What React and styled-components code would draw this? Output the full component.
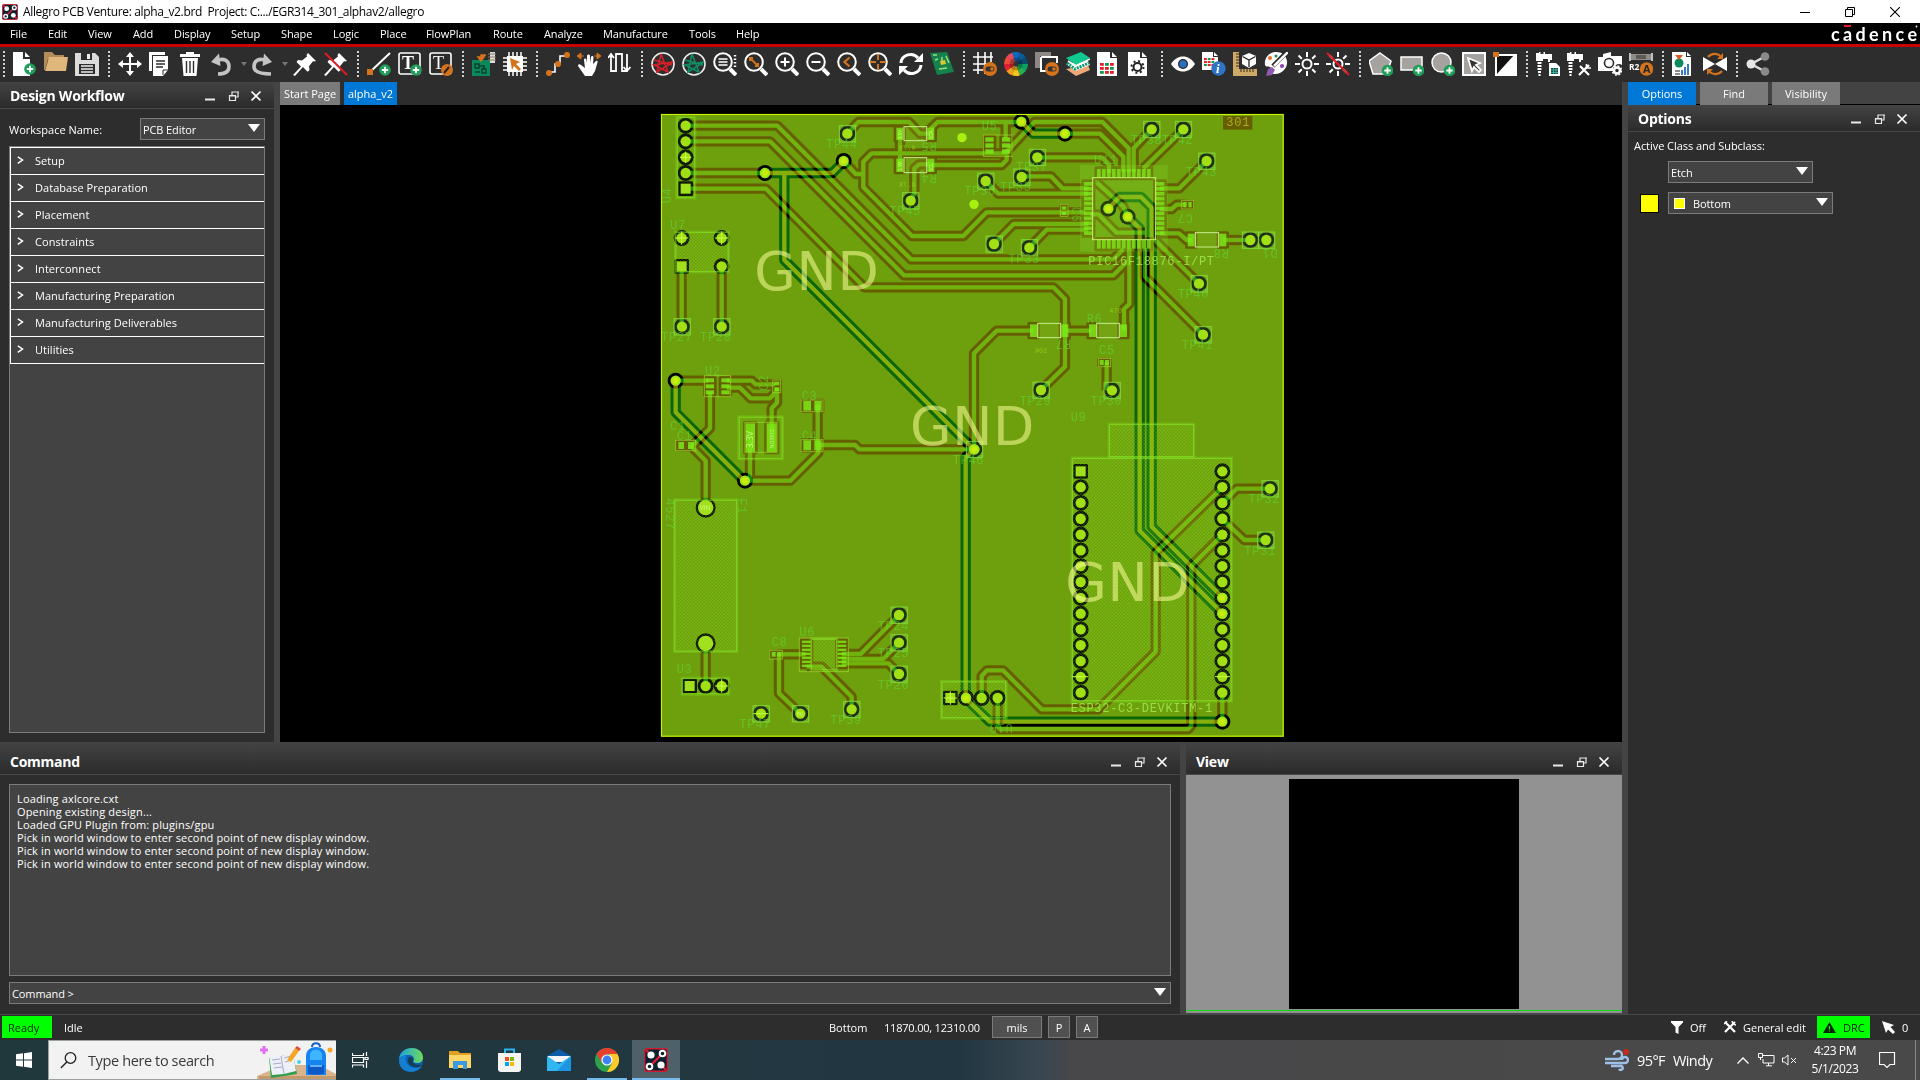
import React from "react";
import styled, { createGlobalStyle, css } from "styled-components";

const Global = createGlobalStyle`
  * { box-sizing: border-box; }
  html, body { margin: 0; padding: 0; overflow: hidden; background: #2d2d2d; }
  body { font-family: "Open Sans", "Noto Sans", sans-serif; font-size: 11px; color: #fff; }
  svg { display: block; flex: none; }
`;

/* ---------- window frame ---------- */
const Window = styled.div`
  width: 1920px;
  height: 1080px;
  display: flex;
  flex-direction: column;
  background: #2d2d2d;
  white-space: nowrap;
`;
const TitleBar = styled.header`
  height: 23px;
  background: #fff;
  color: #000;
  display: flex;
  align-items: center;
  padding: 0 20px 0 2px;
  gap: 5px;
  font-size: 12px;
  letter-spacing: -0.35px;
  white-space: pre;
`;
const Spacer = styled.div`
  flex: 1;
`;
const WindowButtons = styled.div`
  display: flex;
  align-items: center;
  gap: 35px;
`;
const MenuBar = styled.nav`
  height: 21px;
  background: #000;
  display: flex;
  align-items: center;
  padding: 0 0 1px 10px;
  letter-spacing: -0.1px;
`;
const MenuItem = styled.span`
  width: ${(p) => p.$w}px;
`;
const Brand = styled.div`
  margin-left: auto;
  padding-right: 2px;
  display: flex;
  svg { overflow: visible; }
`;
const RedRule = styled.div`
  height: 3px;
  background: #c80000;
`;
const Toolbar = styled.div`
  height: 35px;
  display: flex;
  align-items: center;
  gap: 7px;
  padding: 0 0 1px 1px;
`;
const Divider = styled.i`
  width: 5px;
  height: 26px;
  background: repeating-linear-gradient(#cfcfcf 0 2px, transparent 2px 4px) center / 2px 100% no-repeat;
`;
const Drop = styled.i`
  width: 3px;
  height: 4px;
  display: flex;
  justify-content: center;
  &::after {
    content: "";
    flex: none;
    border: 3px solid transparent;
    border-top: 4px solid #777;
    border-bottom: 0;
  }
`;

/* ---------- work area ---------- */
const Main = styled.div`
  height: 932px;
  display: flex;
`;
const LeftSide = styled.div`
  width: 1622px;
  display: flex;
  flex-direction: column;
`;
const Upper = styled.div`
  height: 660px;
  display: flex;
`;
const Lower = styled.div`
  height: 272px;
  display: flex;
  background: #444;
`;
const Split = styled.div`
  width: 6px;
  background: #444;
`;
const PanelHead = styled.div`
  height: ${(p) => p.$h || 27}px;
  padding: ${(p) => p.$pt || 1}px 12px 0 ${(p) => p.$pl || 10}px;
  background: linear-gradient(#434343, #2b2b2b);
  border-bottom: 1px solid #484848;
  display: flex;
  align-items: center;
  justify-content: space-between;
  font-weight: 700;
  font-size: 14px;
  letter-spacing: -0.25px;
`;
const Workflow = styled.section`
  width: 274px;
  display: flex;
  flex-direction: column;
`;
const WorkspaceRow = styled.div`
  display: flex;
  justify-content: space-between;
  align-items: center;
  padding: 9px 9px 0 9px;
  margin-bottom: 6px;
`;
const Select = styled.div`
  width: ${(p) => p.$w}px;
  height: 22px;
  border: 1px solid #7b7b7b;
  background: #434343;
  display: flex;
  align-items: center;
  padding: 0 4px 0 ${(p) => p.$pl || 2}px;
  gap: 8px;
  letter-spacing: -0.1px;
  &::after {
    content: "";
    margin-left: auto;
    margin-top: -3px;
    border: 6px solid transparent;
    border-top: 8px solid #fff;
    border-bottom: 0;
  }
`;
const Tree = styled.div`
  width: 256px;
  height: 587px;
  margin-left: 9px;
  border: 1px solid #7b7b7b;
  background: #434343;
`;
const TreeRow = styled.div`
  height: 27px;
  border: 1px solid #fff;
  border-width: ${(p) => (p.$last ? "1px 0 1px 1px" : "1px 0 0 1px")};
  ${(p) => p.$last && css`height: 28px;`}
  display: flex;
  align-items: center;
  gap: 11px;
  padding: 0 0 2px 6px;
  letter-spacing: 0.04px;
`;
const CanvasCol = styled.section`
  width: 1342px;
  display: flex;
  flex-direction: column;
`;
const Tabs = styled.div`
  height: 23px;
  display: flex;
  gap: ${(p) => p.$gap}px;
  ${(p) => p.$side && css`background: linear-gradient(#434343 22px, #000 22px);`}
`;
const Tab = styled.div`
  width: ${(p) => p.$w}px;
  height: 23px;
  display: flex;
  align-items: center;
  justify-content: center;
  background: ${(p) => (p.$on ? "#0078d7" : "#7a7a7a")};
`;
const Canvas = styled.div`
  height: 637px;
  background: #000;
`;

const CommandPanel = styled.section`
  width: 1180px;
  background: #2d2d2d;
`;
const Log = styled.div`
  width: 1162px;
  height: 192px;
  margin: 9px 0 6px 9px;
  border: 1px solid #7b7b7b;
  background: #434343;
  padding: 7px;
  line-height: 13px;
  letter-spacing: 0.15px;
`;
const CommandLine = styled(Select)`
  margin-left: 9px;
`;
const ViewPanel = styled.section`
  width: 436px;
`;
const ViewBody = styled.div`
  height: 238px;
  background: #929292;
  display: flex;
  flex-direction: column;
  align-items: center;
  padding-top: 4px;
`;
const ViewWorld = styled.div`
  width: 230px;
  height: 230px;
  background: #000;
  margin-bottom: 1px;
`;
const ViewRule = styled.div`
  width: 100%;
  height: 1px;
  background: #10e010;
`;
const RightPanel = styled.section`
  width: 292px;
`;
const OptionsBody = styled.div`
  display: flex;
  flex-direction: column;
  gap: 9px;
  padding: 3px 0 0 6px;
`;
const OptionsLabel = styled.div`
  height: 22px;
  line-height: 22px;
  margin-bottom: -5px;
  letter-spacing: -0.05px;
`;
const OptionRow = styled.div`
  display: flex;
  align-items: center;
  height: 22px;
  padding-left: ${(p) => p.$pl || 0}px;
  gap: 9px;
`;
const Swatch = styled.i`
  width: ${(p) => p.$s}px;
  height: ${(p) => p.$s}px;
  background: #ff0;
  border: 1px solid ${(p) => p.$edge};
`;

/* ---------- status + taskbar ---------- */
const Status = styled.footer`
  height: 26px;
  border-top: 1px solid #484848;
  display: flex;
  align-items: center;
  padding-bottom: 1px;
`;
const Cell = styled.div`
  width: ${(p) => p.$w}px;
  height: 22px;
  display: flex;
  align-items: center;
  gap: 7px;
  padding-left: ${(p) => p.$pl || 0}px;
  letter-spacing: ${(p) => p.$ls || 0}px;
  ${(p) => p.$green && css`background: #0f0; color: #042404;`}
  margin-left: ${(p) => p.$ml || 0}px;
`;
const StatusButton = styled.div`
  width: ${(p) => p.$w}px;
  height: 22px;
  margin-right: 6px;
  border: 1px solid #7b7b7b;
  background: #505050;
  display: flex;
  align-items: center;
  justify-content: center;
`;
const Taskbar = styled.div`
  height: 40px;
  display: flex;
  background: linear-gradient(90deg, #20373c 0, #223740 36%, #223642 50%, #374650 54%, #48484a 56%, #494949 100%);
`;
const Slot = styled.div`
  width: ${(p) => p.$w || 48}px;
  height: 40px;
  display: flex;
  align-items: center;
  justify-content: center;
  background: ${(p) => (p.$active ? "#4f6168" : "transparent")};
  border-bottom: 2px solid transparent;
  border-top: 2px solid transparent;
  ${(p) => p.$line && css`background: linear-gradient(#76b9ed, #76b9ed) center bottom / ${p.$line}px 2px no-repeat border-box ${p.$active ? ", #4f6168" : ""};`}
`;
const Search = styled.div`
  width: 288px;
  height: 40px;
  background: #f2f2f2;
  border: 1px solid #9aa0a2;
  border-right: 0;
  color: #3a3a3a;
  display: flex;
  align-items: center;
  padding-left: 11px;
  gap: 11px;
  font-size: 14.5px;
  letter-spacing: -0.38px;
`;
const Tray = styled.div`
  margin-left: auto;
  display: flex;
  align-items: center;
  height: 40px;
  font-size: 14.5px;
  letter-spacing: -0.6px;
`;
const TrayItem = styled.div`
  width: ${(p) => p.$w}px;
  height: 40px;
  display: flex;
  align-items: center;
`;
const Clock = styled.div`
  width: 62px;
  margin-right: 13px;
  text-align: center;
  font-size: 12px;
  letter-spacing: -0.4px;
  line-height: 18px;
`;
const TrayEdge = styled.div`
  width: 5px;
  height: 40px;
  border-left: 1px solid #8a8a8a;
`;

/* ---------- toolbar icons (24 × 24) ---------- */
const W = "#fff", O = "#d4731c", G = "#1e9e58", GR = "#a5a2a0";
const Plus = ({ x = 18, y = 18 }) => (
  <g><circle cx={x} cy={y} r="5.8" fill={G} /><path d={`M${x - 3.2} ${y}h6.4M${x} ${y - 3.2}v6.4`} stroke={W} strokeWidth="1.8" /></g>
);
const Lens = ({ children }) => (
  <g fill="none" stroke={W} strokeWidth="2"><circle cx="10" cy="10" r="8.8" /><path d="M17 17l6 6" strokeWidth="4" />{children}</g>
);
const DocShape = ({ w = 20 }) => <path d={`M0 0h${w - 7}v6h7v18H0zM${w - 5} 0l5 5h-5z`} fill={W} />;
const Pin = () => <path d="M15 1l8 8-2 .6-1-.4-4 5 .5 4-2 1.500-4.600-4.600L2 24 0 23l8-8.500-4.500-4.500L5 8l4 .5 5-4-.5-1.500z" fill={W} />;
const Sun = () => (
  <g fill="none" stroke={W} strokeWidth="2"><circle cx="12" cy="12" r="4.500" /><path d="M12 0v5M12 19v5M0 12h5M19 12h5M3.500 3.500l3.300 3.300M17.200 17.200l3.300 3.300M3.500 20.500l3.300-3.300M17.200 6.800l3.300-3.300" /></g>
);
const StarNet = ({ c }) => (
  <g fill="none"><circle cx="12" cy="12" r="11" stroke="#eee" strokeWidth="1.600" /><path d="M10 2l7 18-14-7 19-3L6 20 10 2M3 8l18 5" stroke={c} strokeWidth="1.600" /></g>
);
const Toggle = ({ x = 17, y = 17 }) => (
  <g><circle cx={x} cy={y} r="7" fill={O} /><rect x={x - 4.500} y={y - 2.500} width="9" height="5" rx="2.500" fill="#333" /><circle cx={x + 2} cy={y} r="1.800" fill={O} /></g>
);
const Drill = () => <path d="M0 1h3V0h1.500v2h3V0H9v2h7v6h-2v2h-2V7H7v2H0zM1.500 10h4v2h-4zM1.500 13h4v2h-4zM1.500 16h4v2h-4zM2 19h3v2H2zM2.500 22h2v2h-2z" fill={W} />;
const Grid6 = ({ x, y, s = 1 }) => (
  <g transform={`translate(${x} ${y}) scale(${s})`}>
    {[0, 1, 2].map((r) => [0, 1, 2].map((c) => <rect key={r + "" + c} x={c * 5} y={r * 4} width="3.800" height="2.800" fill={(r * 2 + c) % 3 === 1 ? "#0a9a50" : "#e0202a"} />))}
  </g>
);

const ICONS = {
  new: <><path d="M0 0h10v7h7v17H0zM12 0l5 5h-5z" fill={W} /><Plus x={17} y={17} /></>,
  open: <><path d="M0 0h8l3 3h9v4H4L1 18H0z" fill="#b48c58" /><path d="M5 5h19l-2 14H1z" fill="#dfb77c" /></>,
  save: <><path d="M0 1h20l4 4v19H0z" fill="#dcdcdc" /><path d="M6 1h11v7H6z" fill="#2d2d2d" /><path d="M12 2h3v5h-3z" fill="#eee" /><path d="M4 12h16v10H4z" fill="#2d2d2d" /><path d="M6 14h12M6 17h12M6 20h12" stroke="#eee" strokeWidth="1.500" /></>,
  move: <path d="M12 0l4 5h-3v6h6V8l5 4-5 4v-3h-6v6h3l-4 5-4-5h3v-6H5v3l-5-4 5-4v3h6V5H8z" fill={W} />,
  copy: <><path d="M0 0h16v3H3v16H0z" fill={W} /><path d="M4 4h15v14l-5 6H4z" fill={W} /><path d="M7 9h9M7 12h9M7 15h7" stroke="#2d2d2d" strokeWidth="1.500" /><path d="M14 23v-5h5" fill="none" stroke="#2d2d2d" /></>,
  trash: <><path d="M0 2h6V0h8v2h6v3H0zM2 6h16l-1.500 18h-13z" fill={W} /><path d="M6.500 9v12M10 9v12M13.500 9v12" stroke="#2d2d2d" strokeWidth="1.400" /></>,
  undo: <><path d="M5 9c8-4 13 0 13 5.500 0 5-4 7.500-11 7.500" fill="none" stroke="#c4c4c4" strokeWidth="3.600" /><path d="M0 10L8 1.500 9.500 14z" fill="#c4c4c4" /></>,
  redo: <><path d="M15 9C7 5 2 9 2 14.500 2 19.500 7 22 19 22" fill="none" stroke="#c4c4c4" strokeWidth="3.600" /><path d="M20 10l-8-8.500L10.500 14z" fill="#c4c4c4" /></>,
  pin: <Pin />,
  unpin: <><Pin /><path d="M1 1l22 22" stroke="#e01b24" strokeWidth="2" /></>,
  line: <><path d="M3 20L23 1" stroke={W} strokeWidth="2" /><rect x="0" y="17" width="6" height="6" fill={O} /><Plus x={18} y={18} /></>,
  text: <><rect x="1" y="1" width="21" height="21" rx="2" fill="none" stroke={W} strokeWidth="1.600" /><text x="4" y="17" fontFamily="Liberation Serif, serif" fontSize="18" fontWeight="700" fill={W}>T</text><Plus x={18} y={18} /></>,
  textEdit: <><rect x="1" y="1" width="21" height="21" rx="2" fill="none" stroke={W} strokeWidth="1.600" /><text x="4" y="17" fontFamily="Liberation Serif, serif" fontSize="18" fill={W}>T</text><circle cx="18" cy="18" r="6" fill={O} /><path d="M15 21l5-6" stroke="#222" strokeWidth="2" /></>,
  place: <><path d="M0 8h18v16H0z" fill="#0a8a5c" /><path d="M3 12h4v4H3zM10 17h4v4h-4zM7 14h5v3M3 20h5" fill="none" stroke="#06402c" strokeWidth="1.500" /><path d="M18 0h5v11h-5z" fill="#ddd" /><path d="M16 2h8M16 5h8M16 8h8" stroke="#8a7a60" /><path d="M14 3H9v4M6 5l3 4 3-4z" stroke={O} fill={O} strokeWidth="1.500" /></>,
  chip: <><path d="M6 0v24M10 0v24M14 0v24M18 0v24M0 6h24M0 10h24M0 14h24M0 18h24" stroke={W} strokeWidth="1.500" /><path d="M4 4h16v16H4z" fill={W} /><path d="M7 6l10 4-4 2 5 5-2 2-5-5-2 4z" fill={O} /></>,
  route: <><path d="M3 20h6v-8h5V4h6" fill="none" stroke={W} strokeWidth="1.600" /><circle cx="3" cy="21" r="3" fill={O} /><circle cx="12" cy="12" r="3" fill={O} /><circle cx="21" cy="3" r="3" fill={O} /></>,
  hand: <><path d="M8 24L1 14c0-2 2-2 3-1l4 3-1-8c0-2 2.500-2 2.500 0l.5 3V4c0-2 3-2 3 0v7l1-6c.5-1.500 2.500-1 2.500.5L16 12l3-3c1.500-.5 2 .5 1.500 1.500L18 19l-3 5z" fill={W} /><path d="M1 4h6M17 4h6M0 4l4-3v6zM24 4l-4-3v6z" stroke={O} fill={O} /></>,
  wave: <path d="M3 20V3M0 6l3-4 3 4M3 19h5V2h6v17h5M14 2v17h5V3M15.500 15l3.500 4M19 2v17M22.500 15L19 19" fill="none" stroke={W} strokeWidth="1.800" />,
  netRed: <StarNet c="#d22028" />,
  netGreen: <StarNet c="#0e8c64" />,
  zWin: <><Lens><path d="M5.500 7h9M5.500 10h9M5.500 13h9" strokeWidth="1.500" /></Lens><path d="M22 3v14" stroke={W} strokeWidth="2.500" strokeDasharray="1.500 2" /></>,
  zFit: <Lens><path d="M6 6l8 8M6 9V6h3M14 11v3h-3" stroke={O} /></Lens>,
  zIn: <Lens><path d="M10 5.500v9M5.500 10h9" /></Lens>,
  zOut: <Lens><path d="M5.500 10h9" /></Lens>,
  zPrev: <Lens><path d="M12.500 5.500L7.500 10l5 4.500" stroke={O} strokeWidth="2.200" /></Lens>,
  zCtr: <Lens><path d="M10 2v6M10 12v6M2 10h6M12 10h6" stroke={O} /></Lens>,
  refresh: <><path d="M2 11a9.500 9 0 0 1 17-5M22 13a9.500 9 0 0 1-17 5" fill="none" stroke={W} strokeWidth="3" /><path d="M24 1v9h-9zM0 23v-9h9z" fill={W} /></>,
  pcb: <><path d="M0 1l17-1 7 20-17 3z" fill="#15824e" /><path d="M3 3l4 0M5 8l3-1M16 4l3 7M9 17l8-1M12 5v4" stroke="#9be07a" strokeWidth="1.500" /><path d="M10 9l5-1 1 4-5 1z" fill="#d8c838" /></>,
  grid: <><path d="M5 0v22M12 0v22M18 0v10M0 5h20M0 12h20M0 18h10" stroke={W} strokeWidth="1.600" /><Toggle /></>,
  wheel: <>{["#e84a5a", "#0a6abf", "#0a5a9a", "#0a4a6a", "#0aa060", "#2ab050", "#f5c518", "#f0a020", "#e02030", "#f04a3a"].map((col, i) => {
    const a = (i - 1.500) * 0.628, b = a + 0.640;
    return <path key={i} d={`M12 12L${12 + 12 * Math.sin(a)} ${12 - 12 * Math.cos(a)}A12 12 0 0 1 ${12 + 12 * Math.sin(b)} ${12 - 12 * Math.cos(b)}z`} fill={col} />;
  })}<circle cx="12" cy="12" r="6.500" fill="#000" opacity=".25" /><circle cx="12" cy="12" r="2.500" fill="#333" /></>,
  hilite: <><path d="M0 0h16v4H5v12H0z" fill="#8d8886" /><path d="M6 5h16v6M6 5v14h6" fill="none" stroke={W} strokeWidth="2" /><Toggle /></>,
  layers: <><path d="M0 17l10 7 14-6-2-5z" fill="#f0a878" /><path d="M0 12l9 7 15-6-2-4z" fill={W} /><path d="M1 11l8 6 14-6" stroke="#0a9a70" strokeWidth="3" fill="none" strokeDasharray="2 1" /><path d="M0 6L15 0l9 6-14 7z" fill="#10c890" /><path d="M2 9l8 5 14-7" stroke={W} strokeWidth="1.500" fill="none" /></>,
  report: <><DocShape /><Grid6 x={3} y={11} /></>,
  gearDoc: <><DocShape w={19} /><circle cx="9.500" cy="15" r="4" fill="none" stroke="#222" strokeWidth="2" /><circle cx="9.500" cy="15" r="6" fill="none" stroke="#222" strokeWidth="2" strokeDasharray="2 2.700" /></>,
  eye: <><path d="M0 12C6 2 18 2 24 12 18 22 6 22 0 12z" fill={W} /><circle cx="12" cy="12" r="5" fill="#222" /><circle cx="12" cy="12" r="3.800" fill="#2a6ec0" /></>,
  info: <><path d="M0 0h11v5h5v13H0zM12 0l4 4h-4z" fill={W} /><Grid6 x={2} y={6} s={0.750} /><circle cx="16.500" cy="16.500" r="7.200" fill="#2f74c4" /><text x="14" y="21" fontFamily="Liberation Serif, serif" fontStyle="italic" fontWeight="700" fontSize="13" fill={W}>i</text></>,
  ruler: <><path d="M0 0h6v17h18v7H0z" fill="#cfa968" /><path d="M3 2h3M3 5h3M3 8h3M3 11h3M3 14h3M8 17v3M11 17v3M14 17v3M17 17v3M20 17v3" stroke="#3a2a10" /><path d="M16 1l7 3v8l-7 4-7-4V4z" fill={W} /><path d="M9.500 4.500L16 8l6.500-3.500M16 8v7" stroke="#222" fill="none" strokeWidth="1.300" /></>,
  brush: <><path d="M12 0C4 0 0 7 1 13c1 3 4 0 6 3 0 3-1 6 4 6 8 0 13-7 12-13C22 3 18 0 12 0z" fill={W} /><circle cx="6" cy="6" r="2" fill="#f07020" /><circle cx="12" cy="4" r="1.500" fill="#0a9a50" /><circle cx="18" cy="14" r="2" fill="#8a3fb0" /><path d="M23 0L9 14" stroke="#222" strokeWidth="4.500" /><path d="M24 0L10 14" stroke={W} strokeWidth="2.500" /><path d="M2 24l2-7 4-2 3 3-3 5z" fill="#8d5ab0" /></>,
  sun: <Sun />,
  sunOff: <><Sun /><path d="M1 1l22 22" stroke="#e01b24" strokeWidth="2" /></>,
  poly: <><path d="M11 1l11 8-4 13H4L0 9z" fill={GR} stroke={W} strokeWidth="1.500" /><Plus x={18.500} y={18.500} /></>,
  rect: <><path d="M1 5h21v13H1z" fill={GR} stroke={W} strokeWidth="1.500" /><Plus x={18.500} y={18.500} /></>,
  circ: <><circle cx="10.500" cy="10.500" r="9.500" fill={GR} stroke={W} strokeWidth="1.500" /><Plus x={18.500} y={18.500} /></>,
  select: <><path d="M1 1h22v22H1z" fill={GR} stroke={W} strokeWidth="2" /><path d="M6 6l12 5-4 2 5 5-2 2-5-5-2 4z" fill="#333" stroke={W} strokeWidth="1.800" /></>,
  slot: <><path d="M3 3h20v20H3z" fill="#111" stroke={W} strokeWidth="2" /><path d="M22 2v21H3z" fill={W} /><path d="M0 0h6v5H0z" fill={O} /></>,
  drillRep: <><Drill /><path d="M13 11h7l4 4v9H13z" fill={W} /><path d="M15 16h7v6h-7z" fill="#1c4a46" /><path d="M15 18h7M15 20.500h7M17.500 16v6M20 16v6" stroke="#3ac0a8" strokeWidth=".8" /></>,
  drillCfg: <><Drill /><path d="M13 14l9 9M22 13L12 23" stroke={W} strokeWidth="2.200" /><path d="M19.500 12v4H24" stroke={W} strokeWidth="1.600" fill="none" /></>,
  camera: <><path d="M0 5h5V2l8-2v4h11v9a6 6 0 0 0-9 6H0z" fill={W} /><circle cx="11" cy="11" r="4.500" fill={W} stroke="#2d2d2d" strokeWidth="1.600" /><circle cx="19" cy="18.500" r="3" fill="none" stroke={W} strokeWidth="2.500" /><circle cx="19" cy="18.500" r="4.600" fill="none" stroke={W} strokeWidth="1.500" strokeDasharray="2 1.600" /></>,
  r2a: <><path d="M1 1v8M23 1v8" stroke={W} strokeWidth="1.400" /><path d="M2 2h20v6H2z" fill="#8f8b88" /><path d="M7 3h10v4H7z" fill="#5c5856" /><text x="0" y="18" fontSize="8.500" fontWeight="700" fill={W} fontFamily="Open Sans, sans-serif">R2</text><circle cx="17.500" cy="17" r="6.800" fill={O} /><text x="13.700" y="21" fontSize="11" fontWeight="700" fill="#222" fontFamily="Liberation Sans, sans-serif">A</text></>,
  chart: <><path d="M0 0h14v5h5v19H0zM15 0l4 4h-4z" fill={W} /><circle cx="7" cy="11" r="4.500" fill="#0a8a5c" /><path d="M3 3h8l-4 5z" fill="#e05a20" /><path d="M3 19h5M3 22h5" stroke="#666" strokeWidth="1.500" /><path d="M10 23v-5M13 23v-8M16 23V12" stroke="#3a7ac0" strokeWidth="2" /></>,
  sync: <><path d="M0 5l12 7-12 7zM24 5l-12 7 12 7z" fill={W} /><path d="M5 5a9 9 0 0 1 13-.5M19 19a9 9 0 0 1-13 .5" fill="none" stroke={O} strokeWidth="2.200" /><path d="M20 1v6h-6zM4 23v-6h6z" fill={O} /></>,
  share: <><path d="M20 4L5 12l15 8" fill="none" stroke="#dcdcdc" strokeWidth="2.500" /><circle cx="19" cy="4.500" r="4.300" fill="#8a8a8a" /><circle cx="5" cy="12" r="4.500" fill="#e6e6e6" /><circle cx="19" cy="19.500" r="4.300" fill="#8a8a8a" /></>,
};
const TOOLS = "| new open save | move copy trash undo v redo v pin unpin | line text textEdit | place chip | route hand wave | netRed netGreen zWin zFit zIn zOut zPrev zCtr refresh pcb | grid wheel hilite layers report gearDoc | eye info ruler brush sun sunOff | poly rect circ select slot | drillRep drillCfg camera r2a | chart sync | share".split(" ");

const AllegroLogo = ({ s }) => (
  <svg width={s} height={s} viewBox="0 0 24 24">
    <rect x=".7" y=".7" width="22.600" height="22.600" rx="2" fill="#0a2230" stroke="#d01c30" strokeWidth="1.400" />
    <path d="M2 2l4 4M18 6L6 18M22 22l-4-4" stroke="#e01c34" strokeWidth="2.400" />
    <circle cx="7" cy="7" r="3.600" fill={W} /><circle cx="17" cy="17" r="3.600" fill={W} />
    <circle cx="18.500" cy="5.500" r="2.800" fill="#0a2230" stroke={W} strokeWidth="2" /><circle cx="5.500" cy="18.500" r="2.800" fill="#0a2230" stroke={W} strokeWidth="2" />
  </svg>
);
const PanelButtons = () => (
  <svg width="57" height="12" viewBox="0 0 57 12">
    <path d="M0 9.500h10" stroke="#e8e8e8" strokeWidth="2" />
    <path d="M27 5V2h6v5h-2.500M24.500 5.500h6v5h-6z M24 6h7M27 2h7" fill="none" stroke="#e8e8e8" strokeWidth="1.200" />
    <path d="M46.500 1.500l9 9M55.500 1.500l-9 9" stroke={W} strokeWidth="1.700" />
  </svg>
);

/* ---------- circuit board (3 units per pixel, four quadrants) ---------- */
const shift = { a: [0, 0], b: [930, 0], c: [0, 945], d: [930, 945] };
const place = (q, pts) => {
  const [dx, dy] = shift[q];
  const n = pts.trim().split(/[ ,]+/).map(Number);
  let out = "";
  for (let i = 0; i < n.length; i += 2) out += `${i ? "L" : "M"}${n[i] + dx} ${n[i + 1] + dy}`;
  return out;
};
const BOTTOM = [
  ["a", "92,62 367,62 768,463 1375,463 1405,433"],
  ["a", "92,109 345,109 747,511 1375,511 1422,464 1422,430"],
  ["a", "92,204 330,204"],
  ["a", "92,251 333,251 628,547 1195,547 1230,582 1230,785 1158,855"],
  ["a", "577,86 610,51 762,51 795,86 826,86"],
  ["a", "826,72 848,51 1095,51"],
  ["a", "735,145 735,86"], ["a", "735,145 735,180"],
  ["a", "1052,100 1052,51"],
  ["a", "1055,145 650,145 625,170 625,247 771,393 925,393 995,322 1290,322"],
  ["a", "566,168 602,207 625,207"],
  ["a", "767,287 778,265 778,190 792,178 826,178"],
  ["a", "826,180 1040,180 1055,165 1055,140 1138,51 1342,51 1421,130 1421,200"],
  ["a", "80,484 80,665"], ["a", "200,484 200,665"],
  ["a", "62,827 160,827"], ["a", "215,827 290,827 302,838 360,838"],
  ["a", "215,848 255,848 287,880 345,880 366,858"],
  ["a", "366,850 366,893 350,910 350,985"],
  ["a", "165,862 165,970 115,1020"],
  ["a", "488,900 488,1020"],
  ["b", "300,86 405,86 475,155 475,200"],
  ["b", "217,157 410,157 432,178 432,205"],
  ["b", "170,214 258,214 292,250 370,250"],
  ["b", "62,228 100,266 370,266"],
  ["b", "87,417 146,357 370,357"], ["b", "193,428 245,374 370,374"],
  ["b", "560,73 506,130 506,200"], ["b", "655,73 535,190"],
  ["b", "725,168 643,250 585,250"],
  ["b", "585,312 620,312 635,299 660,299"],
  ["b", "585,385 642,385 665,405 680,405"], ["b", "775,405 856,405"],
  ["b", "570,405 702,536"], ["b", "540,430 540,515 714,689"],
  ["b", "493,430 493,597 477,612 477,677"],
  ["b", "300,677 380,677"], ["b", "205,677 95,677 27,745 27,1033"],
  ["b", "425,772 425,856"],
  ["b", "375,328 400,328 455,383 540,383"],
  ["b", "395,232 475,305 488,335"],
  ["c", "490,75 600,75 613,88 958,88"],
  ["c", "490,75 490,98 406,182 270,182"], ["c", "285,60 285,182"],
  ["c", "105,75 152,122 152,263"], ["c", "152,670 152,798"],
  ["c", "370,703 452,703"], ["c", "372,703 372,820 436,881"],
  ["c", "455,740 500,740 590,830 590,868"],
  ["c", "560,702 617,702 732,585"], ["c", "560,717 685,717 732,668"], ["c", "560,730 700,730 732,762"],
  ["d", "50,834 50,768 66,751 114,751 230,868 400,868 572,695 572,398 772,202"],
  ["d", "98,834 98,920 106,927 670,927 679,917 679,438 772,345"],
  ["d", "772,818 772,905"],
  ["d", "772,249 815,206 915,206"], ["d", "772,297 838,360 902,360"],
];
const TOP = [
  ["a", "330,204 532,204 566,170"], ["a", "388,204 388,465 956,1033"],
  ["a", "62,827 62,922 267,1127"],
  ["b", "169,50 205,86 300,86"],
  ["b", "430,311 463,276 528,276 560,308 560,1265 772,1477"],
  ["b", "488,335 524,370 524,1277 772,1525"],
  ["c", "958,88 932,112 932,835 1004,905 1702,905"],
];
const VIAS = [["a", 330, 204], ["a", 566, 168], ["a", 62, 827], ["b", 169, 50], ["b", 300, 86], ["b", 430, 311], ["b", 488, 335], ["c", 270, 182], ["d", 772, 905]];
const HOLES = [["a", 92, 62], ["a", 92, 109], ["a", 92, 157], ["a", 92, 204], ["a", 80, 399], ["a", 200, 399], ["a", 200, 484], ["c", 152, 798], ["c", 200, 798], ["c", 933, 834], ["d", 50, 834], ["d", 98, 834]];
for (let i = 0; i < 15; i++) {
  if (i) HOLES.push(["d", 347, 154 + i * 47.430]);
  HOLES.push(["d", 772, 154 + i * 47.430]);
}
const SQUARES = [["a", 92, 251], ["a", 80, 484], ["c", 104, 798], ["c", 886, 834], ["d", 347, 154]];
const TESTS = [["a", 577, 86], ["a", 767, 287], ["a", 81, 665], ["a", 200, 665], ["b", 217, 157], ["b", 170, 216], ["b", 62, 228], ["b", 87, 417], ["b", 193, 428], ["b", 560, 73], ["b", 655, 73], ["b", 725, 168], ["b", 702, 536], ["b", 714, 689], ["b", 228, 855], ["b", 441, 856], ["c", 732, 585], ["c", 732, 668], ["c", 732, 762], ["c", 318, 881], ["c", 436, 881], ["c", 590, 868], ["c", 958, 88], ["d", 915, 206], ["d", 902, 360], ["b", 856, 405], ["b", 904, 405]];
const BIG = [["c", 152, 263], ["c", 152, 670]];
const BOXES = [
  ["a", 64, 35, 57, 245, 0], ["a", 60, 380, 162, 122, 1],
  ["a", 250, 934, 134, 129, 0],
  ["c", 57, 238, 190, 458, 1], ["c", 80, 773, 143, 51, 0], ["c", 467, 655, 80, 97, 1],
  ["c", 858, 783, 197, 113, 1], ["d", 320, 113, 481, 732, 1], ["d", 431, 11, 257, 102, 1],
];
const PARTS = [["a", 747, 65, 68, 42], ["a", 747, 158, 68, 45], ["b", 218, 655, 69, 43], ["b", 395, 655, 68, 43], ["b", 691, 383, 70, 43]];
const PADS = [];
PARTS.forEach(([q, x, y, w, h]) => { PADS.push([q, x - 23, y + 3, 21, h - 5]); PADS.push([q, x + w + 2, y + 3, 21, h - 5]); });
[0, 1, 2].forEach((i) => {
  PADS.push(["a", 152, 820 + i * 18, 25, 12], ["a", 199, 820 + i * 18, 25, 12], ["b", 61, 97 + i * 18, 25, 13], ["b", 111, 97 + i * 18, 25, 13]);
});
PADS.push(["a", 358, 830, 15, 11], ["a", 358, 847, 15, 11], ["a", 445, 888, 23, 29], ["a", 478, 888, 22, 29], ["c", 445, 61, 23, 30], ["c", 478, 61, 22, 30], ["c", 70, 66, 17, 21], ["c", 99, 66, 18, 21], ["c", 350, 696, 12, 14], ["c", 366, 696, 12, 14], ["b", 404, 765, 12, 15], ["b", 420, 765, 12, 15], ["b", 655, 291, 10, 16], ["b", 670, 291, 10, 16], ["b", 290, 304, 14, 10], ["b", 290, 320, 14, 10], ["a", 272, 955, 28, 86], ["a", 335, 955, 30, 86]);
for (let i = 0; i < 7; i++) PADS.push(["c", 441, 662 + i * 12, 26, 7], ["c", 548, 662 + i * 12, 26, 7]);
const QFP = [];
for (let i = 0; i < 11; i++) QFP.push([396 + i * 15, 192, 11, 26], [396 + i * 15, 404, 11, 27], [357, 231 + i * 14.800, 26, 11], [572, 231 + i * 14.800, 26, 11]);
const LABELS = [
  ["a", 513, 130, "TP44"], ["a", 703, 331, "TP45"], ["a", 18, 709, "TP27"], ["a", 135, 709, "TP28"], ["a", 45, 371, "U7"], ["a", 150, 809, "U2"], ["a", 440, 884, "C3"], ["a", 928, 270, "TP36"],
  ["b", 497, 118, "TP38"], ["b", 590, 118, "TP42"], ["b", 662, 212, "TP43"], ["b", 153, 199, "TP37"], ["b", 105, 259, "TP35"], ["b", 130, 473, "TP33"], ["b", 50, 75, "U5"], ["b", 387, 177, "U11"], ["b", 638, 579, "TP40"], ["b", 650, 733, "TP41"], ["b", 164, 899, "TP29"], ["b", 377, 899, "TP30"], ["b", 365, 655, "R6"], ["b", 402, 748, "C5"], ["b", 317, 949, "U9"],
  ["c", 440, 59, "C4"], ["c", 45, 31, "C1"], ["c", 65, 60, "C1"], ["c", 668, 629, "TP24"], ["c", 668, 711, "TP25"], ["c", 668, 806, "TP26"], ["c", 526, 912, "TP39"], ["c", 253, 924, "TP47"], ["c", 350, 679, "C8"], ["c", 433, 649, "U6"], ["c", 65, 759, "U3"], ["c", 893, 131, "TP46"],
  ["d", 850, 249, "TP32"], ["d", 838, 404, "TP31"],
];
const MIRROR = [["a", 845, 110, "R5"], ["a", 845, 207, "R4"], ["b", 318, 706, "R7"], ["b", 792, 433, "R8"], ["b", 938, 433, "D1"], ["b", 683, 326, "C7"], ["d", 143, 911, "U10"]];
const TURNED = [["a", 48, 295, "U4", -90], ["a", 340, 857, "C2", -90], ["b", 322, 305, "C6", 90], ["c", 32, 235, "4527", 90], ["c", 250, 235, "F1", 90]];

const at = (q, x, y) => [x + shift[q][0], y + shift[q][1]];
const Layer = ({ base, core, traces, extra }) => (
  <g style={{ mixBlendMode: "screen" }}>
    <rect x="18" y="27" width="1868" height="1868" fill={base} />
    <g fill="none" stroke="#000" strokeWidth="31" strokeLinejoin="round">{traces.map(([q, p], i) => <path key={i} d={place(q, p)} />)}</g>
    {extra}
    <g fill="#000">
      {[...VIAS, ...HOLES, ...TESTS].map(([q, x, y], i) => { const [X, Y] = at(q, x, y); return <circle key={i} cx={X} cy={Y} r="24" />; })}
      {BIG.map(([q, x, y], i) => { const [X, Y] = at(q, x, y); return <circle key={i} cx={X} cy={Y} r="30" />; })}
      {SQUARES.map(([q, x, y], i) => { const [X, Y] = at(q, x, y); return <rect key={i} x={X - 22} y={Y - 22} width="44" height="44" rx="4" />; })}
    </g>
    <g fill="none" stroke={core} strokeWidth="13" strokeLinejoin="round">{traces.map(([q, p], i) => <path key={i} d={place(q, p)} />)}</g>
  </g>
);
const mono = { fontFamily: '"Liberation Mono", monospace', fontSize: 36, letterSpacing: 2.100 };

const Board = () => (
  <svg width="1342" height="637" viewBox="-1125 0 4026 1911">
    <defs>
      <pattern id="dots" width="10" height="10" patternUnits="userSpaceOnUse"><rect x="1" y="1" width="3" height="3" fill="#9cf030" /><rect x="6" y="6" width="3" height="3" fill="#9cf030" /></pattern>
    </defs>
    <g style={{ isolation: "isolate" }}>
      <Layer base="rgb(102,95,0)" core="rgb(128,120,0)" traces={TOP} />
      <Layer base="rgb(12,103,12)" core="rgb(18,134,14)" traces={BOTTOM} extra={
        <g fill="#000">{PADS.map(([q, x, y, w, h], i) => { const [X, Y] = at(q, x, y); return <rect key={i} x={X - 8} y={Y - 7} width={w + 16} height={h + 14} rx="5" />; })}
          {QFP.map(([x, y, w, h], i) => <rect key={i} x={x + 922} y={y - 8} width={w + 16} height={h + 16} rx="5" />)}</g>
      } />
    </g>
    <rect x="1704" y="33" width="88" height="41" fill="#665f00" />
    <rect x="1275" y="180" width="263" height="260" fill="#8adc30" opacity=".28" />
    {BOXES.map(([q, x, y, w, h, d], i) => {
      const [X, Y] = at(q, x, y);
      return <g key={i}>{d ? <rect x={X} y={Y} width={w} height={h} fill="url(#dots)" opacity=".6" /> : null}
        <rect x={X} y={Y} width={w} height={h} fill="#7ce020" fillOpacity={d ? 0.040 : 0.120} stroke="#7ed820" strokeWidth="6" strokeOpacity=".4" />
        <rect x={X + 3} y={Y + 3} width={w - 6} height={h - 6} fill="none" stroke="#90f030" strokeWidth="2.500" strokeOpacity=".6" /></g>;
    })}
    <g fill="#7cf018" fillOpacity=".8">{PADS.map(([q, x, y, w, h], i) => { const [X, Y] = at(q, x, y); return <rect key={i} x={X} y={Y} width={w} height={h} />; })}</g>
    <g fill="#7cee18" fillOpacity=".75">{QFP.map(([x, y, w, h], i) => <rect key={i} x={x + 930} y={y} width={w} height={h} />)}</g>
    <rect x="1313" y="218" width="189" height="186" fill="none" stroke="#c8f070" strokeWidth="3" />
    {PARTS.map(([q, x, y, w, h], i) => { const [X, Y] = at(q, x, y); return <rect key={i} x={X} y={Y} width={w} height={h} fill="#8ab020" fillOpacity=".25" stroke="#c8f090" strokeWidth="3" />; })}
    <g fill="none" stroke="#a0d830" strokeOpacity=".7" strokeWidth="3">
      <rect x="148" y="812" width="79" height="63" /><rect x="353" y="825" width="24" height="38" /><rect x="438" y="885" width="66" height="35" /><rect x="438" y="1004" width="66" height="36" />
      <rect x="62" y="1006" width="60" height="31" /><rect x="344" y="1636" width="38" height="26" /><rect x="433" y="1599" width="147" height="101" /><rect x="985" y="90" width="86" height="64" />
      <rect x="1330" y="760" width="37" height="25" /><rect x="1580" y="286" width="36" height="26" /><rect x="1216" y="299" width="23" height="35" /><rect x="270" y="952" width="96" height="90" />
    </g>
    {TESTS.map(([q, x, y], i) => { const [X, Y] = at(q, x, y); return <rect key={i} x={X - 24} y={Y - 24} width="49" height="49" fill="#98e070" fillOpacity=".22" stroke="#84e038" strokeWidth="3" strokeOpacity=".85" />; })}
    {[...HOLES, ...TESTS].map(([q, x, y], i) => { const [X, Y] = at(q, x, y); return <circle key={i} cx={X} cy={Y} r="15.500" fill="#a0e014" />; })}
    {BIG.map(([q, x, y], i) => { const [X, Y] = at(q, x, y); return <circle key={i} cx={X} cy={Y} r="23" fill="#a0e01c" />; })}
    {SQUARES.map(([q, x, y], i) => { const [X, Y] = at(q, x, y); return <rect key={i} x={X - 15} y={Y - 15} width="30" height="30" fill="#a0e01c" />; })}
    {[...VIAS, ["c", 958, 88], ["c", 933, 834], ["d", 772, 154 + 8 * 47.430], ["d", 772, 154 + 9 * 47.430]].map(([q, x, y], i) => { const [X, Y] = at(q, x, y); return <g key={i}><circle cx={X} cy={Y} r="15.500" fill="#a4e81c" /><circle cx={X} cy={Y} r="8.500" fill="#ccec0a" /></g>; })}
    {[[921, 98], [957, 298]].map(([x, y]) => <circle key={x} cx={x} cy={y} r="14" fill="#a8f010" />)}
    <path d="M75 157h34M92 140v34M60 399h40M80 379v40M180 399h40M200 379v40M180 1743h40M200 1723v40M866 1779h40M886 1759v40M1250 1715h50M1680 1715h45M295 1826h46" stroke="#c8ff40" strokeWidth="3" />
    <g {...mono} fill="#5fe040" fillOpacity=".52">
      {LABELS.map(([q, x, y, t], i) => { const [X, Y] = at(q, x, y); return <text key={i} x={X} y={Y}>{t}</text>; })}
      {MIRROR.map(([q, x, y, t], i) => { const [X, Y] = at(q, x, y); return <text key={i} transform={`translate(${X} ${Y}) rotate(180)`}>{t}</text>; })}
      {TURNED.map(([q, x, y, t, r], i) => { const [X, Y] = at(q, x, y); return <text key={i} transform={`translate(${X} ${Y}) rotate(${r})`}>{t}</text>; })}
    </g>
    <g {...mono} fill="#a4ee50" fillOpacity=".8">
      <text x="1300" y="480">PIC16F18876-I/PT</text>
      <text x="1247" y="1822">ESP32-C3-DEVKITM-1</text>
    </g>
    <text {...mono} x="1714" y="64" fill="#b0a820">301</text>
    <g {...mono} fontSize="20" letterSpacing="1" fill="#9ed820" fillOpacity=".7">
      <text x="1363" y="625">470</text><text transform="translate(1177 744) scale(-1 1)">10K</text><text transform="translate(782 134) scale(-1 1)">4.7K</text><text transform="translate(782 247) scale(-1 1)">4.7K</text>
    </g>
    <g fontFamily="Open Sans, sans-serif" fontSize="20" fill="#d8ff90" fillOpacity=".85">
      <text x="134" y="1215">VIN</text><text transform="translate(294 1030) rotate(-90)" fontSize="26">3.3V</text><text transform="translate(357 1030) rotate(-90)" fontSize="15">NO3812</text>
      <text transform="translate(742 103) rotate(-90)" fontSize="14">3.3V</text><text transform="translate(742 199) rotate(-90)" fontSize="14">3.3V</text><text transform="translate(834 103) rotate(-90)" fontSize="14">SDA</text><text transform="translate(834 199) rotate(-90)" fontSize="14">SCL</text>
      <text x="425" y="1832" fontSize="16">5V</text>
    </g>
    <g fontFamily="DejaVu Sans, sans-serif" fontSize="161" letterSpacing="2" fill="#ffff9c" fillOpacity=".55">
      <text x="298" y="555">GND</text><text x="765" y="1020">GND</text><text x="1231" y="1487">GND</text>
    </g>
    <rect x="19.500" y="28.500" width="1865" height="1865" fill="none" stroke="#c8f400" strokeWidth="3.500" />
  </svg>
);

/* ---------- taskbar drawings ---------- */
const Edge = () => (
  <svg width="24" height="24" viewBox="0 0 24 24">
    <defs><linearGradient id="eg" x1="0" x2="1"><stop offset="0" stopColor="#1ba1e2" /><stop offset="1" stopColor="#6edb5a" /></linearGradient></defs>
    <circle cx="12" cy="12" r="12" fill="#0c5fb4" /><path d="M0 12C0-3 24-4 24 10c0 5-6 6-10 4 2-2 1-7-4-7C5 7 0 9 0 12z" fill="url(#eg)" />
    <path d="M0 12c1-3 4-4.500 8-4.500C5 10 7 20 17 20c2 0 4-1 6-2-4 8-23 9-23-6z" fill="#1380d4" /><path d="M10 9c-3 4 0 10 7 10 2 0 4-.5 6-1.500l-2-1c-4 1-8-1-7-4 1-1 0-4-4-3.500z" fill="#163f56" />
  </svg>
);
const Explorer = () => (
  <svg width="23" height="18" viewBox="0 0 23 18"><path d="M0 0h9l2 2h11v15H0z" fill="#e0a020" /><path d="M0 4h22v13H0z" fill="#ffd766" /><path d="M4 10h14v8h-4v-4H9v4H4z" fill="#3e9ae0" /></svg>
);
const Store = () => (
  <svg width="23" height="24" viewBox="0 0 23 24"><path d="M7 6V1.500h9V6" fill="none" stroke="#28b4f0" strokeWidth="2" /><path d="M0 5h23v16c0 2-1 3-3 3H3c-2 0-3-1-3-3z" fill="#f4f4f4" /><path d="M7 9h4v4H7z" fill="#f25022" /><path d="M12 9h4v4h-4z" fill="#7fba00" /><path d="M7 14h4v4H7z" fill="#00a4ef" /><path d="M12 14h4v4h-4z" fill="#ffb900" /></svg>
);
const Mail = () => (
  <svg width="24" height="22" viewBox="0 0 24 22"><path d="M0 7l12-7 12 7v15H0z" fill="#0f5ea8" /><path d="M1 7h22v6H1z" fill="#f4f8fc" /><path d="M0 7l12 8 12-8v15H0z" fill="#30b6f0" /><path d="M24 7L10 22h14z" fill="#1c96e0" /></svg>
);
const Chrome = () => (
  <svg width="24" height="24" viewBox="0 0 24 24"><circle cx="12" cy="12" r="12" fill="#2ca24c" /><path d="M1.600 6A12 12 0 0 1 22.400 6H12L7 15z" fill="#e8402e" /><path d="M22.400 6A12 12 0 0 1 12 24l5.200-9L14 6z" fill="#fcc928" /><circle cx="12" cy="12" r="5.600" fill={W} /><circle cx="12" cy="12" r="4.400" fill="#3c82f0" /></svg>
);
const SearchArt = () => (
  <svg width="79" height="38" viewBox="0 0 79 38">
    <path d="M0 35l26-11h36l17 9v5H0z" fill="#d9b48c" /><path d="M2 35h77v3H2z" fill="#c49a6c" />
    <path d="M7 5v8M3 9h8" stroke="#e070f0" strokeWidth="3" />
    <path d="M12 17l24-4 4 20-26 4z" fill="#2f9e4f" /><path d="M12 15l12 0 12-3 3 18-12 3-12 1z" fill="#eef0f8" /><path d="M24 15l3 18M15 19l8-1M16 23l8-1M17 27l8-1M27 17l7-2M28 21l7-2" stroke="#a8aac8" />
    <path d="M30 19l8-12 4 3-8 11z" fill="#f5a623" /><path d="M38 7l2-2 4 3-2 2z" fill="#e04a3a" />
    <circle cx="42" cy="21" r="2" fill="#50d0e8" /><circle cx="73" cy="9" r="2.500" fill="#f5a623" />
    <path d="M55 6c0-5 8-5 8 0" fill="none" stroke="#1560c8" strokeWidth="2" /><path d="M49 15c0-12 20-12 20 0v19H49z" fill="#1583f0" /><path d="M53 14c0-7 12-7 12 0v5H53z" fill="#3fb4ff" /><path d="M51 24h16v8c0 2-16 2-16 0z" fill="#0f58c8" /><path d="M53 25h12" stroke="#7fd0ff" strokeWidth="1.500" />
  </svg>
);

const MENU = [["File", 38], ["Edit", 40], ["View", 45], ["Add", 41], ["Display", 57], ["Setup", 50], ["Shape", 52], ["Logic", 47], ["Place", 46], ["FlowPlan", 67], ["Route", 51], ["Analyze", 59], ["Manufacture", 86], ["Tools", 47], ["Help", 40]];
const FLOW = ["Setup", "Database Preparation", "Placement", "Constraints", "Interconnect", "Manufacturing Preparation", "Manufacturing Deliverables", "Utilities"];
const LOG = ["Loading axlcore.cxt", "Opening existing design...", "Loaded GPU Plugin from: plugins/gpu", "Pick in world window to enter second point of new display window.", "Pick in world window to enter second point of new display window.", "Pick in world window to enter second point of new display window."];

export default function App() {
  return (
    <Window>
      <Global />
      <TitleBar>
        <AllegroLogo s={16} />
        <span>{"Allegro PCB Venture: alpha_v2.brd  Project: C:.../EGR314_301_alphav2/allegro"}</span>
        <Spacer />
        <WindowButtons>
          <svg width="10" height="10"><path d="M0 5.500h10" stroke="#000" /></svg>
          <svg width="10" height="10"><path d="M.5 2.500h7v7h-7zM2.500 2V.5h7v7H8" fill="none" stroke="#000" /></svg>
          <svg width="10" height="10"><path d="M0 0l10 10M10 0L0 10" stroke="#000" strokeWidth="1.100" /></svg>
        </WindowButtons>
      </TitleBar>
      <MenuBar>
        {MENU.map(([t, w]) => <MenuItem key={t} $w={w}>{t}</MenuItem>)}
        <Brand>
          <svg width="88" height="20" viewBox="0 0 88 20">
            <text x="1" y="17.500" fontFamily="Lato, sans-serif" fontWeight="700" fontSize="18" fill={W} textLength="86" lengthAdjust="spacing">cadence</text>
            <path d="M14 3h7" stroke="#e01c34" strokeWidth="2.200" /><circle cx="86.500" cy="3.500" r=".9" fill={W} />
          </svg>
        </Brand>
      </MenuBar>
      <RedRule />
      <Toolbar>
        {TOOLS.map((t, i) => t === "|" ? <Divider key={i} /> : t === "v" ? <Drop key={i} /> : <svg key={i} width="24" height="24" viewBox="0 0 24 24">{ICONS[t]}</svg>)}
      </Toolbar>
      <Main>
        <LeftSide>
          <Upper>
            <Workflow>
              <PanelHead>Design Workflow<PanelButtons /></PanelHead>
              <WorkspaceRow>Workspace Name:<Select $w={125}>PCB Editor</Select></WorkspaceRow>
              <Tree>
                {FLOW.map((t, i) => (
                  <TreeRow key={t} $last={i === FLOW.length - 1}>
                    <svg width="7" height="9"><path d="M.8.8L5.500 4 .8 7.400" fill="none" stroke={W} strokeWidth="1.500" /></svg>{t}
                  </TreeRow>
                ))}
              </Tree>
            </Workflow>
            <Split />
            <CanvasCol>
              <Tabs $gap={4}><Tab $w={60}>Start Page</Tab><Tab $w={53} $on>alpha_v2</Tab></Tabs>
              <Canvas><Board /></Canvas>
            </CanvasCol>
          </Upper>
          <Lower>
            <CommandPanel>
              <PanelHead $h={33} $pt={7}>Command<PanelButtons /></PanelHead>
              <Log>{LOG.map((t, i) => <div key={i}>{t}</div>)}</Log>
              <CommandLine $w={1162}>Command &gt;</CommandLine>
            </CommandPanel>
            <Split />
            <ViewPanel>
              <PanelHead $h={33} $pt={7}>View<PanelButtons /></PanelHead>
              <ViewBody><ViewWorld /><ViewRule /></ViewBody>
            </ViewPanel>
          </Lower>
        </LeftSide>
        <Split />
        <RightPanel>
          <Tabs $gap={4} $side><Tab $w={68} $on>Options</Tab><Tab $w={68}>Find</Tab><Tab $w={68}>Visibility</Tab></Tabs>
          <PanelHead>Options<PanelButtons /></PanelHead>
          <OptionsBody>
            <OptionsLabel>Active Class and Subclass:</OptionsLabel>
            <OptionRow $pl={34}><Select $w={145}>Etch</Select></OptionRow>
            <OptionRow $pl={6}><Swatch $s={19} $edge="#000" /><Select $w={165} $pl={5}><Swatch $s={11} $edge="#fff" />Bottom</Select></OptionRow>
          </OptionsBody>
        </RightPanel>
      </Main>
      <Status>
        <Cell $w={50} $green $ml={2} $pl={6}>Ready</Cell>
        <Cell $w={765} $pl={12}>Idle</Cell>
        <Cell $w={55} $ml={12}>Bottom</Cell>
        <Cell $w={108} $ls={-0.200}>11870.00, 12310.00</Cell>
        <StatusButton $w={50}>mils</StatusButton><StatusButton $w={22}>P</StatusButton><StatusButton $w={22}>A</StatusButton>
        <Spacer />
        <Cell $w={53}><svg width="12" height="13"><path d="M0 0h12v1.500L7.500 6v7l-3-1.500V6L0 1.500z" fill={W} /></svg>Off</Cell>
        <Cell $w={93}><svg width="12" height="12"><path d="M1 1l10 10M11 1L1 11" stroke={W} strokeWidth="2.200" /><path d="M0 3l3-3M8 0l1 3 3 1" stroke={W} fill="none" strokeWidth="1.500" /></svg>General edit</Cell>
        <Cell $w={53} $green $pl={6}><svg width="13" height="11"><path d="M6.500 0L13 11H0z" fill="#022402" /><path d="M6.500 4v3.500M6.500 8.500v1" stroke="#0f0" strokeWidth="1.200" /></svg>DRC</Cell>
        <Cell $w={38} $ml={12}><svg width="13" height="13"><path d="M0 0l12 4-3.500 2L13 11l-2 2-5-4.500L4 12z" fill={W} /></svg>0</Cell>
      </Status>
      <Taskbar>
        <Slot><svg width="16" height="16"><path d="M0 2.300l7-1V7.500H0zM8 1.200L16 0v7.500H8zM0 8.500h7v6.200l-7-1zM8 8.500h8V16l-8-1.200z" fill={W} /></svg></Slot>
        <Search>
          <svg width="17" height="17"><circle cx="10.500" cy="6" r="5.300" fill="none" stroke="#222" strokeWidth="1.300" /><path d="M6.800 10L.8 16" stroke="#222" strokeWidth="1.400" /></svg>
          Type here to search<Spacer /><SearchArt />
        </Search>
        <Slot><svg width="17" height="16"><path d="M.5 1v2.500h11V1M.5 15.500V13h11v2.500M.5 5.500h11v5H.5zM14.500 0v4M14.500 9v7M13 5.500h3v2h-3z" fill="none" stroke={W} strokeWidth="1.200" /></svg></Slot>
        <Slot $w={54}><Edge /></Slot>
        <Slot $w={44} $line={40}><Explorer /></Slot>
        <Slot $w={54}><Store /></Slot>
        <Slot $w={45}><Mail /></Slot>
        <Slot $w={51} $line={40}><Chrome /></Slot>
        <Slot $w={48} $active $line={48}><AllegroLogo s={24} /></Slot>
        <Tray>
          <TrayItem $w={32}><svg width="24" height="22"><path d="M0 10h13a4 4 0 1 0-4-4M0 14h20a3 3 0 1 0-3-3M6 17h9a2 2 0 1 1-1 3" fill="none" stroke="#9fc0e4" strokeWidth="2.400" /><circle cx="21" cy="3" r="3" fill="#c42b1c" /></svg></TrayItem>
          <TrayItem $w={36}>95°F</TrayItem>
          <TrayItem $w={64}>Windy</TrayItem>
          <TrayItem $w={21}><svg width="12" height="7"><path d="M.5 6.500L6 1l5.500 5.500" fill="none" stroke={W} strokeWidth="1.300" /></svg></TrayItem>
          <TrayItem $w={24}><svg width="17" height="14"><path d="M5 2.500h11v7.500H5V6M8 12.800h6M10.500 10v3M.5.5h4v4h-4zM2.500 4.500V7" fill="none" stroke={W} /></svg></TrayItem>
          <TrayItem $w={22}><svg width="15" height="12"><path d="M.5 4h2L6 1v10L2.500 8h-2zM9 4l5 5M14 4L9 9" fill="none" stroke={W} /></svg></TrayItem>
          <Clock>4:23 PM<br />5/1/2023</Clock>
          <TrayItem $w={36}><svg width="17" height="17"><path d="M.5.5h15v12H11L8 15.500 5 12.500H.5z" fill="none" stroke={W} strokeWidth="1.200" /></svg></TrayItem>
          <TrayEdge />
        </Tray>
      </Taskbar>
    </Window>
  );
}
